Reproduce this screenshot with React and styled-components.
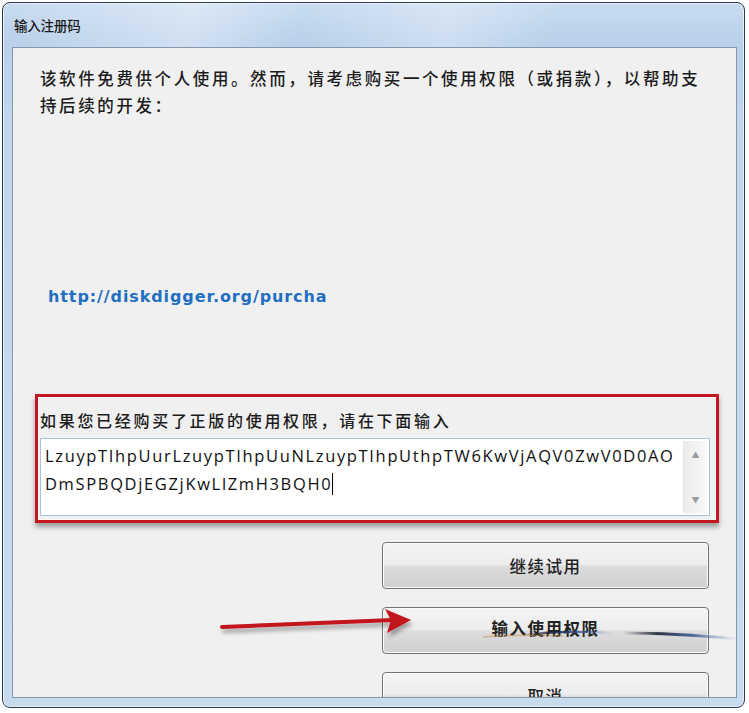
import React from "react";
import styled, { createGlobalStyle } from "styled-components";

const Global = createGlobalStyle`
  html, body { margin: 0; padding: 0; background: #ffffff; }
  body { font-family: "Noto Sans CJK SC", "Noto Sans", sans-serif; }
`;

const Window = styled.div`
  position: relative;
  margin: 2px 0 0 2px;
  width: 743px;
  height: 706px;
  box-sizing: border-box;
  border: 1px solid #2f3a48;
  border-radius: 8px;
  background: linear-gradient(180deg, #c9dcf0 0px, #b8d0ea 40px, #c2d7ee 120px, #c7dbef 100%);
  padding: 0 7px 9px 9px;
  display: flex;
  flex-direction: column;
  overflow: hidden;
  box-shadow: inset 0 0 0 1px #e6f0fa;
`;

const TitleBar = styled.div`
  height: 44px;
  display: flex;
  align-items: center;
  padding-left: 2px;
  font-family: "Noto Sans CJK SC", sans-serif;
  font-size: 13.5px;
  font-weight: 500;
  color: #1a1a1a;
  letter-spacing: -0.2px;
  background: linear-gradient(100deg, transparent 0%, rgba(255,255,255,0.35) 25%, transparent 40%, rgba(255,255,255,0.3) 60%, transparent 75%);
`;

const Panel = styled.div`
  position: relative;
  flex: 1;
  background: #f0f0f0;
  border: 1px solid #8797ab;
  overflow: hidden;
  display: flex;
  flex-direction: column;
`;

const Intro = styled.p`
  margin: 17px 0 0 27px;
  width: 665px;
  font-size: 16.5px;
  font-weight: 500;
  line-height: 27px;
  letter-spacing: 2.6px;
  color: #1c1c1c;
`;

const Link = styled.a`
  margin: 165px 0 0 35px;
  font-family: "DejaVu Sans", sans-serif;
  font-weight: bold;
  font-size: 16px;
  line-height: 26px;
  letter-spacing: 0.9px;
  color: #1f6fc2;
  text-decoration: none;
`;

const Highlight = styled.div`
  margin: 84px 0 0 22px;
  width: 684px;
  height: 131px;
  box-sizing: border-box;
  border: 3px solid #c3161e;
  box-shadow: 0 4px 5px rgba(0,0,0,0.35), inset 0 0 0 1px rgba(255,255,255,0.5);
  padding: 13px 6px 4px 2px;
  display: flex;
  flex-direction: column;
`;

const FieldLabel = styled.div`
  font-size: 16px;
  font-weight: 500;
  line-height: 20px;
  letter-spacing: 2.7px;
  color: #1c1c1c;
`;

const TextBox = styled.div`
  margin-top: 8px;
  height: 78px;
  box-sizing: border-box;
  border: 1px solid #abc1d6;
  background: #ffffff;
  display: flex;
`;

const TextContent = styled.div`
  flex: 1;
  padding: 3px 0 0 4px;
  font-family: "Open Sans", sans-serif;
  font-size: 16.5px;
  line-height: 28px;
  letter-spacing: 1.65px;
  color: #111;
  white-space: nowrap;
  overflow: hidden;
`;

const Caret = styled.span`
  display: inline-block;
  width: 1px;
  height: 22px;
  background: #000;
  vertical-align: -5px;
`;

const ScrollBar = styled.div`
  width: 23px;
  margin: 2px 2px 2px 0;
  background: linear-gradient(90deg, #ececec, #f7f7f7);
  border-left: 1px solid #e6e6e6;
  display: flex;
  flex-direction: column;
  justify-content: space-between;
  align-items: center;
  padding: 8px 0 8px;
  color: #9a9a9a;
  font-size: 8px;
`;

const ButtonColumn = styled.div`
  margin: 19px 0 0 369px;
  display: flex;
  flex-direction: column;
  gap: 18px;
`;

const Button = styled.div`
  flex-shrink: 0;
  width: 327px;
  height: 47px;
  box-sizing: border-box;
  border: 1px solid #747474;
  border-radius: 4px;
  background: linear-gradient(180deg, #f4f4f4 0%, #ececec 48%, #dcdcdc 52%, #d0d0d0 100%);
  box-shadow: inset 0 0 0 1px #fbfbfb;
  display: flex;
  align-items: center;
  justify-content: center;
  font-size: 16.5px;
  letter-spacing: 1.5px;
  color: #222;
  font-weight: ${(p) => (p.$bold ? 700 : 500)};
  padding-bottom: ${(p) => (p.$bold ? "6px" : "0")};
`;

const Overlay = styled.svg`
  position: absolute;
  left: 0;
  top: 0;
  pointer-events: none;
`;

export default function App() {
  return (
    <>
      <Global />
      <Window>
        <TitleBar>输入注册码</TitleBar>
        <Panel>
          <Intro>该软件免费供个人使用。然而，请考虑购买一个使用权限（或捐款），以帮助支持后续的开发：</Intro>
          <Link href="#">http://diskdigger.org/purcha</Link>
          <Highlight>
            <FieldLabel>如果您已经购买了正版的使用权限，请在下面输入</FieldLabel>
            <TextBox>
              <TextContent>
                {"LzuypTIhpUurLzuypTIhpUuNLzuypTIhpUthpTW6KwVjAQV0ZwV0D0AO"}
                <br />
                {"DmSPBQDjEGZjKwLlZmH3BQH0"}
                <Caret />
              </TextContent>
              <ScrollBar>
                <span>▲</span>
                <span>▼</span>
              </ScrollBar>
            </TextBox>
          </Highlight>
          <ButtonColumn>
            <Button>继续试用</Button>
            <Button $bold>输入使用权限</Button>
            <Button>取消</Button>
          </ButtonColumn>
        </Panel>
        <Overlay width="743" height="706" viewBox="0 0 743 706">
          <defs>
            <filter id="sh" x="-10%" y="-50%" width="120%" height="250%">
              <feDropShadow dx="2" dy="4" stdDeviation="2" floodColor="#000" floodOpacity="0.35" />
            </filter>
            <linearGradient id="streak" x1="0" x2="1" y1="0" y2="0">
              <stop offset="0" stopColor="#1a2030" stopOpacity="0" />
              <stop offset="0.3" stopColor="#1a2030" stopOpacity="0.9" />
              <stop offset="0.6" stopColor="#2a4a8a" stopOpacity="0.8" />
              <stop offset="1" stopColor="#6a90c0" stopOpacity="0" />
            </linearGradient>
          </defs>
          <g filter="url(#sh)">
            <path d="M219 624 L390 617" stroke="#c3161e" strokeWidth="4" strokeLinecap="round" fill="none" />
            <path d="M382 606 L408 617 L384 630 L388 617 Z" fill="#c3161e" />
          </g>
          <path d="M520 632 Q560 627 610 630" stroke="url(#streak)" strokeWidth="2.5" fill="none" />
          <path d="M620 630 Q670 630 735 636" stroke="url(#streak)" strokeWidth="3" fill="none" />
          <path d="M480 634 Q520 631 560 633" stroke="#c08a40" strokeOpacity="0.5" strokeWidth="1.5" fill="none" />
        </Overlay>
      </Window>
    </>
  );
}
